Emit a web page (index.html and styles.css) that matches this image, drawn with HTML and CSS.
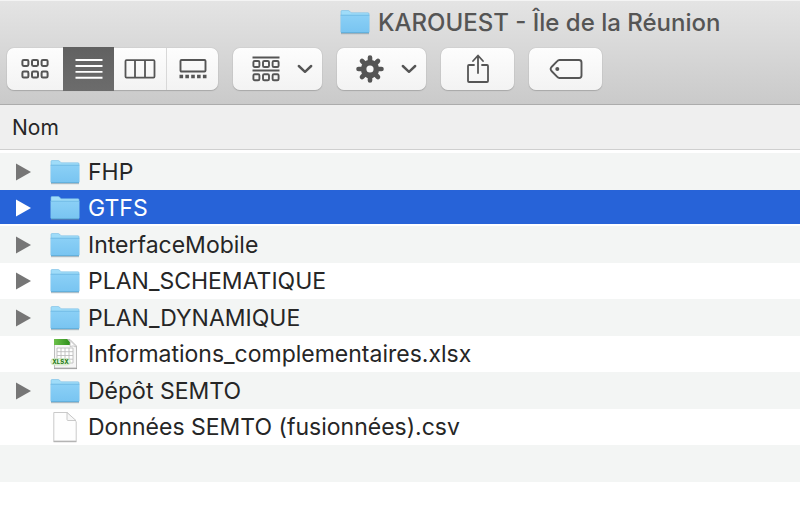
FILE: index.html
```
<!DOCTYPE html>
<html lang="fr">
<head>
<meta charset="utf-8">
<title>KAROUEST - Île de la Réunion</title>
<link rel="stylesheet" href="styles.css">
</head>
<body>
<svg class="defs" aria-hidden="true">
  <defs>
    <linearGradient id="folder-fill" x1="0" y1="0" x2="0" y2="1">
      <stop offset="0" stop-color="#8bd0f6"/><stop offset="1" stop-color="#78c4f1"/>
    </linearGradient>
    <linearGradient id="green-fill" x1="0" y1="0" x2="1" y2="0">
      <stop offset="0" stop-color="#6cc04a"/><stop offset="1" stop-color="#2f8f1c"/>
    </linearGradient>
    <symbol id="folder" viewBox="0 0 30 26">
      <path d="M1 24.5h28" stroke="#6c8593" stroke-opacity=".5" stroke-width="1.4"/>
      <path d="M1 23V2.500Q1 1.500 2 1.500H8Q9 1.500 9.700 2.300L10.500 3.200Q11 3.800 12 3.800H28Q29 3.800 29 4.800V23Z" fill="#9fdcf9" stroke="#79bde4" stroke-width=".6"/>
      <path d="M.7 6H29.300V23Q29.300 24 28.300 24H1.700Q.7 24 .7 23Z" fill="url(#folder-fill)"/>
      <path d="M.7 6.200H29.300" stroke="#69b5df" stroke-width=".8"/>
      <path d="M1 23.600H29" stroke="#5aa8d3" stroke-width=".8"/>
    </symbol>
    <symbol id="chevron" viewBox="0 0 16 10">
      <path d="M1.800 2L8 7.800L14.200 2" fill="none" stroke="#555" stroke-width="2.400" stroke-linecap="round" stroke-linejoin="round"/>
    </symbol>
    <symbol id="triangle" viewBox="0 0 15 18">
      <path d="M0 .5L15 9L0 17.500Z" fill="currentColor"/>
    </symbol>
  </defs>
</svg>

<header class="titlebar">
  <h1 class="title"><svg class="folder" aria-hidden="true"><use href="#folder"/></svg>KAROUEST - Île de la Réunion</h1>
  <div class="toolbar">
    <div class="segments" role="group" aria-label="Présentation">
      <button class="segment" aria-label="Icônes">
        <svg width="28" height="22" viewBox="0 0 28 22" fill="none" stroke="#555" stroke-width="2">
          <rect x="1.400" y="1.900" width="6" height="6" rx="1.300"/><rect x="11" y="1.900" width="6" height="6" rx="1.300"/><rect x="20.600" y="1.900" width="6" height="6" rx="1.300"/>
          <rect x="1.400" y="13.600" width="6" height="6" rx="1.300"/><rect x="11" y="13.600" width="6" height="6" rx="1.300"/><rect x="20.600" y="13.600" width="6" height="6" rx="1.300"/>
        </svg>
      </button>
      <button class="segment active" aria-label="Liste" aria-pressed="true">
        <svg width="28" height="22" viewBox="0 0 28 22" stroke="#fff" stroke-width="1.900"><path d="M.5 2H27.500M.5 8H27.500M.5 13.900H27.500M.5 19.800H27.500"/></svg>
      </button>
      <button class="segment" aria-label="Colonnes">
        <svg width="32" height="20" viewBox="0 0 32 20" fill="none" stroke="#555" stroke-width="1.800"><rect x="1.500" y="1.200" width="29" height="17.400" rx="1"/><path d="M11 1.500V18.500M21 1.500V18.500"/></svg>
      </button>
      <button class="segment" aria-label="Galerie">
        <svg width="28" height="20" viewBox="0 0 28 20" fill="none" stroke="#555" stroke-width="1.900"><rect x="1.500" y="1" width="25" height="11.500" rx="1"/><path d="M.5 17.500H27.500" stroke-width="3.600" stroke-dasharray="3.600 2.250"/></svg>
      </button>
    </div>
    <button class="tool menu" aria-label="Regrouper">
      <svg width="28" height="28" viewBox="0 0 28 28" fill="none" stroke="#555" stroke-width="1.900">
        <path d="M.5 2.500H27.500M.5 15.500H27.500"/>
        <rect x="1.400" y="6" width="6" height="6" rx="1.300"/><rect x="11" y="6" width="6" height="6" rx="1.300"/><rect x="20.600" y="6" width="6" height="6" rx="1.300"/>
        <rect x="1.400" y="19.200" width="6" height="6" rx="1.300"/><rect x="11" y="19.200" width="6" height="6" rx="1.300"/><rect x="20.600" y="19.200" width="6" height="6" rx="1.300"/>
      </svg>
      <svg class="chevron"><use href="#chevron"/></svg>
    </button>
    <button class="tool menu" aria-label="Actions">
      <svg width="28" height="28" viewBox="-14 -14 28 28">
        <g stroke="#555" stroke-width="4.600" stroke-linecap="round">
          <path d="M0-11.500V-7M0 11.500V7M-11.500 0H-7M11.500 0H7M-8-8L-5-5M8 8L5 5M8-8L5-5M-8 8L-5 5"/>
        </g>
        <circle r="6.400" fill="none" stroke="#555" stroke-width="5.600"/>
      </svg>
      <svg class="chevron"><use href="#chevron"/></svg>
    </button>
    <button class="tool" aria-label="Partager">
      <svg width="24" height="32" viewBox="0 0 24 32" fill="none" stroke="#555" stroke-width="1.800" stroke-linecap="round" stroke-linejoin="round"><path d="M8 12H3Q2 12 2 13V28Q2 29 3 29H21Q22 29 22 28V13Q22 12 21 12H16M12 20V3M7 8L12 2.500L17 8"/></svg>
    </button>
    <button class="tool" aria-label="Tags">
      <svg width="34" height="22" viewBox="0 0 34 22" fill="none" stroke="#555" stroke-width="1.900" stroke-linejoin="round"><path d="M10.500 2H30Q32.500 2 32.500 4.500V17.500Q32.500 20 30 20H10.500Q9.200 20 8 18.700L2.500 13Q.8 11 2.500 9L8 3.300Q9.200 2 10.500 2Z"/><circle cx="8.300" cy="11" r="2" fill="#555" stroke="none"/></svg>
    </button>
  </div>
</header>

<table class="files">
  <thead><tr><th scope="col">Nom</th></tr></thead>
  <tbody>
    <tr><td><div class="entry"><button class="toggle" aria-label="Ouvrir FHP"><svg><use href="#triangle"/></svg></button><svg class="folder"><use href="#folder"/></svg><span>FHP</span></div></td></tr>
    <tr class="selected"><td><div class="entry"><button class="toggle" aria-label="Ouvrir GTFS"><svg><use href="#triangle"/></svg></button><svg class="folder"><use href="#folder"/></svg><span>GTFS</span></div></td></tr>
    <tr><td><div class="entry"><button class="toggle" aria-label="Ouvrir InterfaceMobile"><svg><use href="#triangle"/></svg></button><svg class="folder"><use href="#folder"/></svg><span>InterfaceMobile</span></div></td></tr>
    <tr><td><div class="entry"><button class="toggle" aria-label="Ouvrir PLAN_SCHEMATIQUE"><svg><use href="#triangle"/></svg></button><svg class="folder"><use href="#folder"/></svg><span>PLAN_SCHEMATIQUE</span></div></td></tr>
    <tr><td><div class="entry"><button class="toggle" aria-label="Ouvrir PLAN_DYNAMIQUE"><svg><use href="#triangle"/></svg></button><svg class="folder"><use href="#folder"/></svg><span>PLAN_DYNAMIQUE</span></div></td></tr>
    <tr><td><div class="entry"><span class="leaf"></span>
      <svg class="doc" viewBox="0 0 30 32">
        <path d="M4 30.500H27" stroke="#999" stroke-width="1.200"/>
        <path d="M4.500 1.500H20L26.500 8V30H4.500Z" fill="#f6f6f6" stroke="#b5b5b5" stroke-width=".9"/>
        <path d="M4 1H17L20 4V7H4Z" fill="url(#green-fill)"/>
        <path d="M19 1.500Q21 4 20 8.500Q23 7 26.500 9Z" fill="#fff" stroke="#bbb" stroke-width=".8"/>
        <path d="M7 10H23V25H7ZM7 13.700H23M7 17.500H23M7 21.200H23M11 10V25M15 10V25M19 10V25" fill="#fff" stroke="#bdbdbd" stroke-width=".9"/>
        <rect x=".8" y="20.500" width="19.500" height="6.500" rx="3.200" fill="#e5f4dc" stroke="#c3dfb5" stroke-width=".6"/>
        <text class="badge" x="10.500" y="25.600" text-anchor="middle">XLSX</text>
      </svg><span>Informations_complementaires.xlsx</span></div></td></tr>
    <tr><td><div class="entry"><button class="toggle" aria-label="Ouvrir Dépôt SEMTO"><svg><use href="#triangle"/></svg></button><svg class="folder"><use href="#folder"/></svg><span>Dépôt SEMTO</span></div></td></tr>
    <tr><td><div class="entry"><span class="leaf"></span>
      <svg class="doc" viewBox="0 0 30 32">
        <path d="M3.500 30.600H26.500" stroke="#a8a8a8" stroke-width="1.200"/>
        <path d="M3.800 1.500H17L26.200 10.500V30H3.800Z" fill="#fefefe" stroke="#c4c4c4" stroke-width=".9"/>
        <path d="M17 1.500V8.500Q17 9.500 18 9.500H26Z" fill="#f7f7f7" stroke="#c4c4c4" stroke-width=".9"/>
      </svg><span>Données SEMTO (fusionnées).csv</span></div></td></tr>
    <tr><td></td></tr>
  </tbody>
</table>
</body>
</html>
```
FILE: styles.css
```
* { box-sizing: border-box; }

body {
  margin: 0;
  background: #fff;
  color: #262626;
  font-family: Inter, "Liberation Sans", sans-serif;
  font-size: 23px;
}

button {
  border: 0;
  padding: 0;
  background: none;
  color: inherit;
  font: inherit;
}

svg { display: block; flex: none; }

.defs { position: absolute; width: 0; height: 0; }

.folder { width: 30px; height: 26px; }

.titlebar {
  padding-bottom: 11px;
  border-top: 1px solid #f4f4f4;
  border-bottom: 1px solid #acacac;
  background: linear-gradient(#e4e4e4, #cacaca);
}

.title {
  display: flex;
  align-items: center;
  gap: 8px;
  height: 42px;
  margin: 0 0 2px;
  padding-left: 340px;
  color: #555;
  font-size: 24px;
  font-weight: 500;
  white-space: nowrap;
}

.toolbar {
  display: flex;
  align-items: center;
  gap: 15px;
  height: 48px;
  padding-left: 7px;
}

.segments,
.tool {
  height: 42px;
  border-radius: 7px;
  background: linear-gradient(#fdfdfd, #f3f3f3);
  box-shadow: 0 0 1px #999, 0 1px 1px #aaa;
}

.segments { display: flex; align-items: center; width: 211px; }

.segment {
  display: flex;
  flex: 1 1 52px;
  align-items: center;
  justify-content: center;
  height: 42px;
}

.segment:first-child { flex-basis: 56px; }
.segment:last-child { border-left: 1px solid #d8d8d8; }

.segment.active {
  height: 44px;
  background: linear-gradient(#616161, #6c6c6c);
}

.tool {
  display: flex;
  align-items: center;
  justify-content: center;
  width: 73px;
}

.tool.menu { gap: 17px; width: 89px; padding-left: 9px; }

.chevron { width: 16px; height: 10px; }

.files { width: 100%; border-collapse: separate; border-spacing: 0; }

.files th {
  height: 45px;
  padding: 0 12px;
  border-bottom: 1px solid #cfcfcf;
  background: #efefef;
  font-size: 21px;
  font-weight: 400;
  text-align: left;
}

.files tbody::before {
  display: table-row;
  height: 3px;
  content: "";
}

.files td { height: 36px; padding: 0; }
.files tr:nth-child(odd) td { height: 37px; background: #f3f5f4; }

.files .selected td {
  background: #2763d8;
  box-shadow: inset 0 -2px #fff;
  color: #fff;
}

.entry {
  display: flex;
  align-items: center;
  gap: 8px;
  height: 34px;
  padding-left: 16px;
  white-space: nowrap;
}

.toggle { width: 26px; color: #767676; }
.toggle svg { width: 15px; height: 18px; }
.selected .toggle { color: #fff; }
.leaf { width: 26px; }

.doc { width: 30px; height: 32px; }

.badge {
  fill: #2c7d1b;
  font-size: 6px;
  font-weight: 800;
}
```
